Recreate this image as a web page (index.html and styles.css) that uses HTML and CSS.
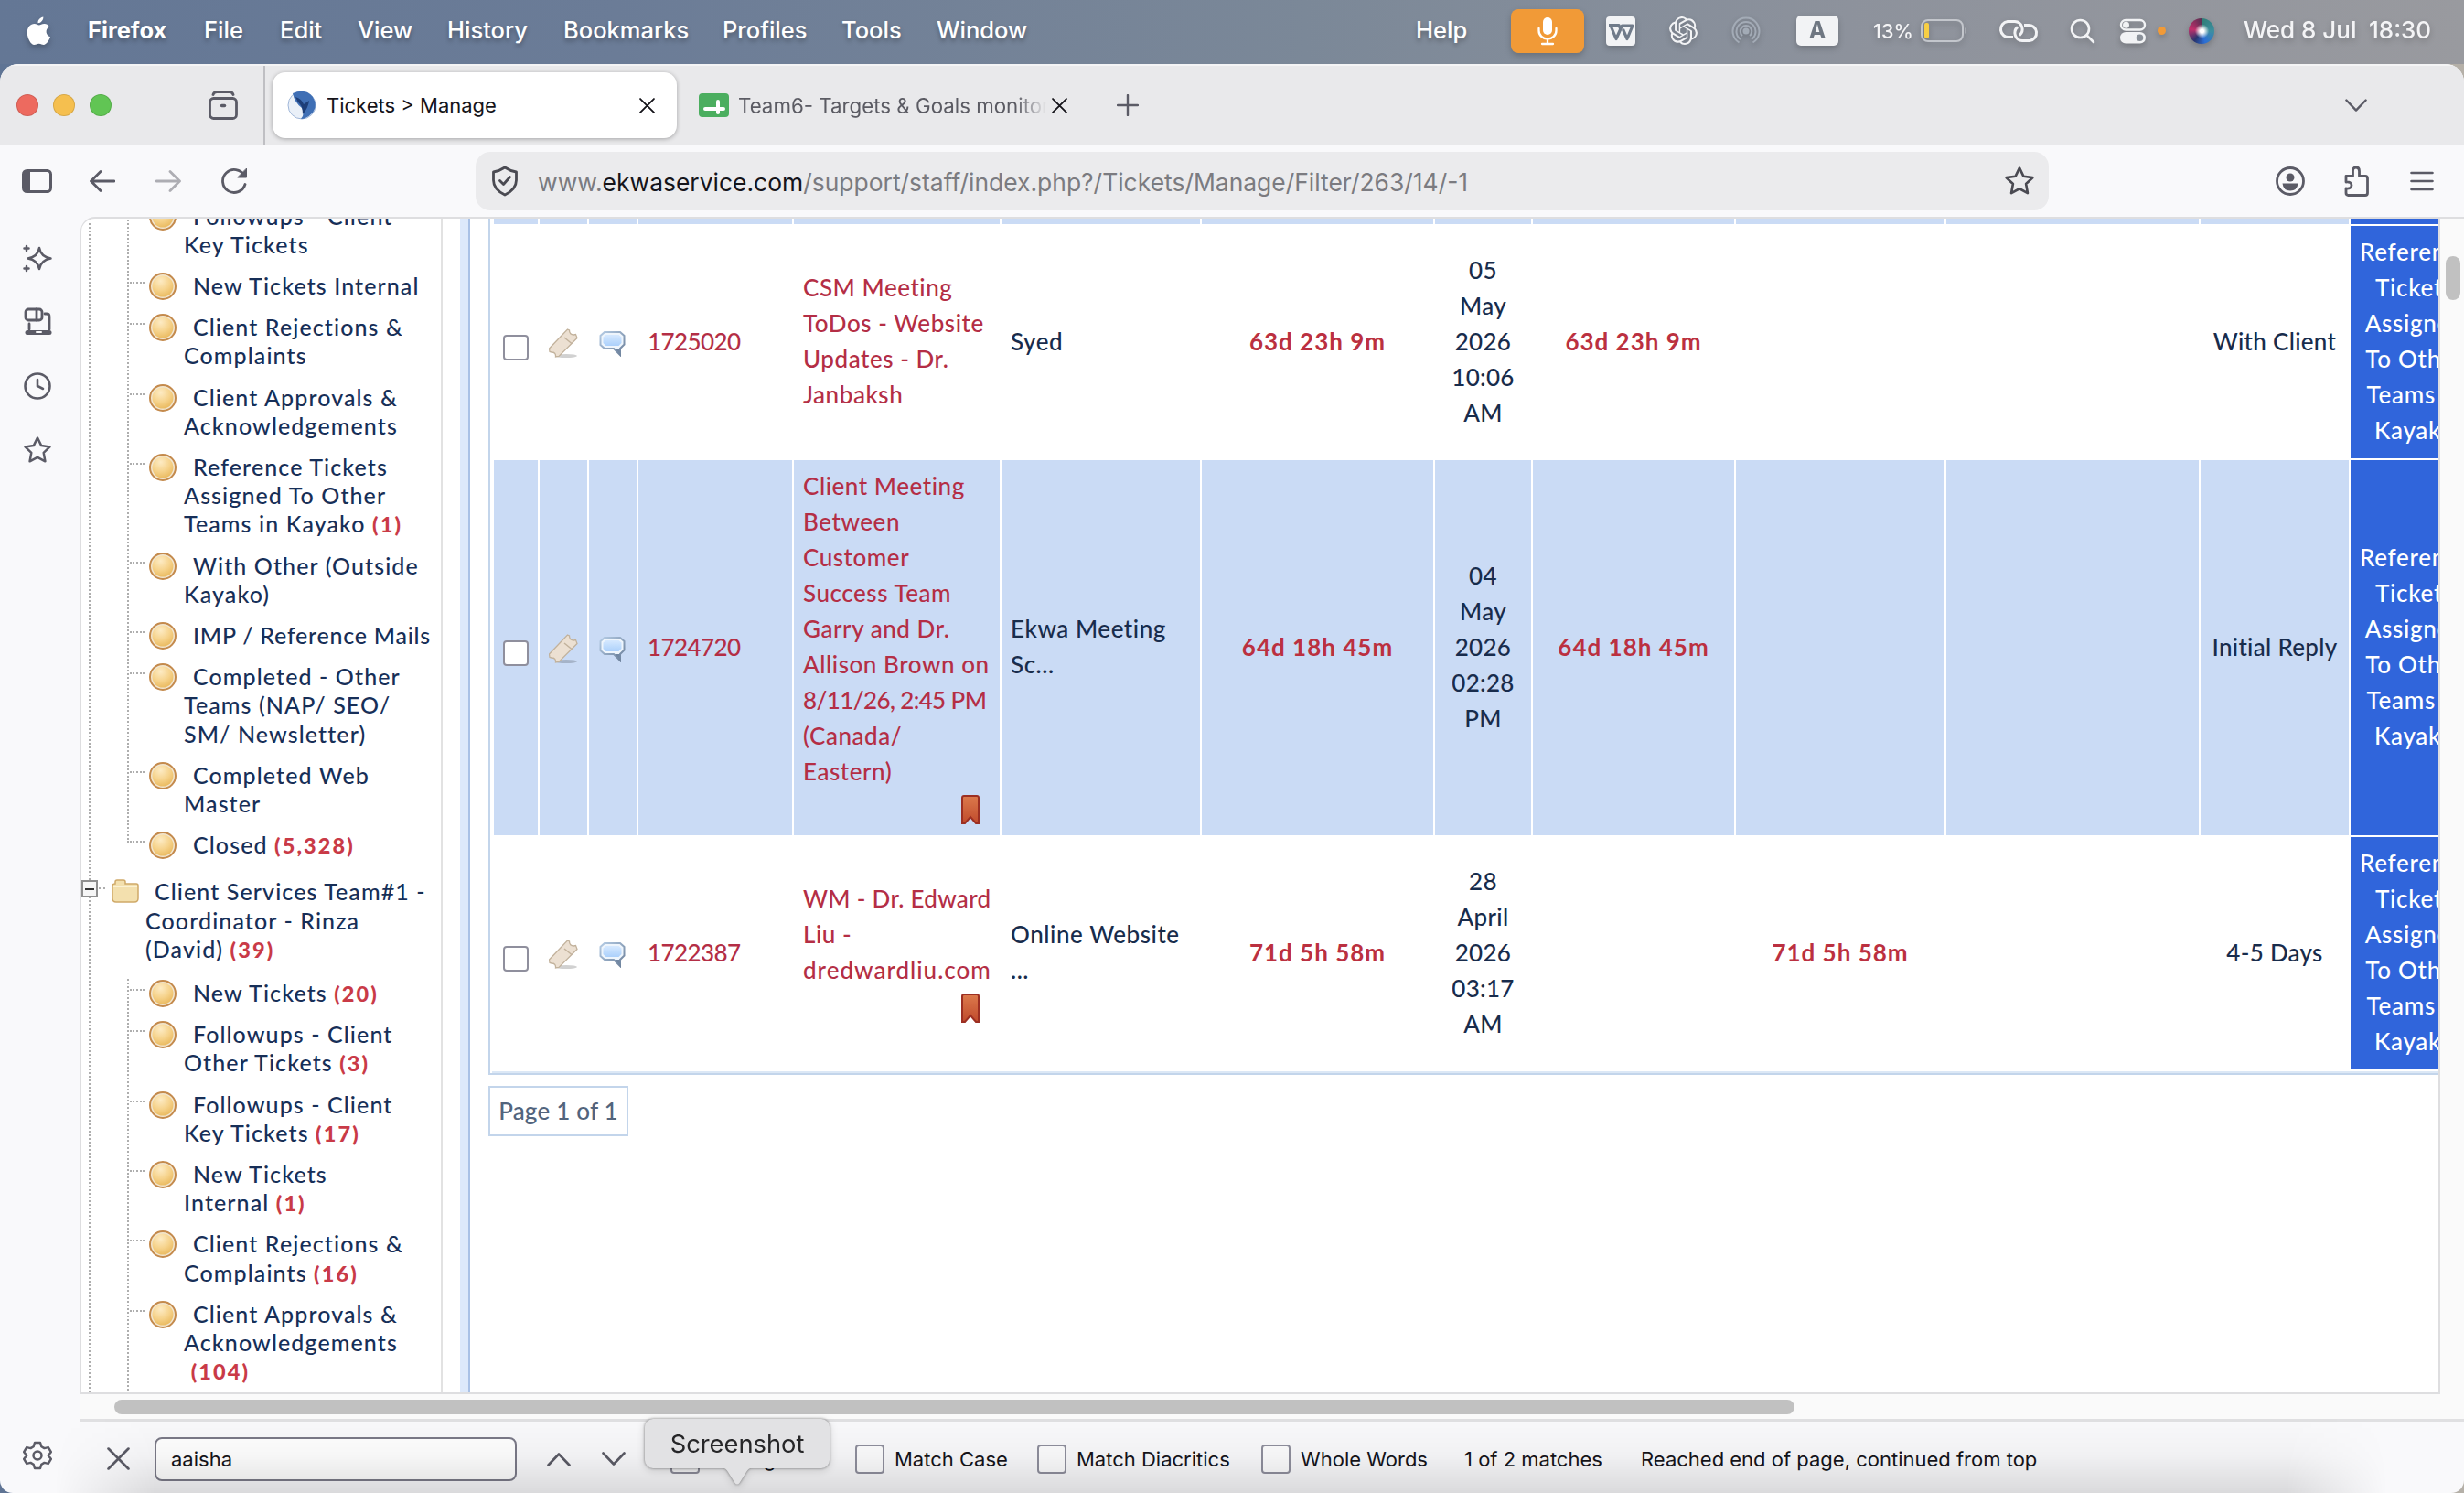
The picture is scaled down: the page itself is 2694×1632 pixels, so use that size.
FILE: index.html
```html
<!DOCTYPE html>
<html lang="en">
<head>
    <meta charset="UTF-8">
    <title>Tickets &gt; Manage</title>
    <link rel="stylesheet" href="styles.css">
</head>
<body>
    <!-- Shared icons -->
    <svg class="defs" width="0" height="0">
        <defs>
            <radialGradient id="gold" cx="0.4" cy="0.25" r="0.8">
                <stop offset="0" stop-color="#fdebc4"/>
                <stop offset="0.55" stop-color="#f6d38c"/>
                <stop offset="1" stop-color="#e9b85c"/>
            </radialGradient>
            <linearGradient id="blue" x1="0" y1="0" x2="0" y2="1">
                <stop offset="0" stop-color="#d6e9ff"/>
                <stop offset="1" stop-color="#abd0fb"/>
            </linearGradient>
            <linearGradient id="edge" x1="0" y1="0" x2="1" y2="1">
                <stop offset="0" stop-color="#b4cbe4"/>
                <stop offset="1" stop-color="#6b7f99"/>
            </linearGradient>
            <linearGradient id="red" x1="0" y1="0" x2="0" y2="1">
                <stop offset="0" stop-color="#dc7a4c"/>
                <stop offset="1" stop-color="#c04a2c"/>
            </linearGradient>
            <symbol id="ball" viewBox="0 0 30 30">
                <circle cx="15" cy="15" r="14" fill="#f1e6d0" stroke="#c48a4c" stroke-width="2"/>
                <circle cx="15" cy="15" r="11.5" fill="url(#gold)"/>
            </symbol>
            <symbol id="ticket" viewBox="0 0 32 32">
                <ellipse cx="19" cy="30" rx="12" ry="2" fill="#000" opacity="0.18"/>
                <path d="M20.500 1l2 1q0 5 5 5l2-.5 1.500 4-20 20-3.500.5q.5-5-4.500-5l-2-.5-.5-3.500z" fill="#ece0d2" stroke="#c2b29c" stroke-width="1.300"/>
                <path d="M17 10l8 6.500" stroke="#c2b29c" stroke-width="1.500"/>
            </symbol>
            <symbol id="bubble" viewBox="0 0 30 30">
                <path d="M6 3h17l4.500 4v9.500L23 21v7l-7-7H6l-4.500-4V7z" fill="#eef5fc" stroke="url(#edge)" stroke-width="2"/>
                <path d="M7.500 6h14l3 2.500v6.500l-3 3h-14l-3-3V8.500z" fill="url(#blue)"/>
                <path d="M17 21h5.500v6z" fill="#7187a3"/>
            </symbol>
            <symbol id="flag" viewBox="0 0 20 32">
                <path d="M1 3q0-2 2-2h14q2 0 2 2v28h-3l-6-7-6 7H1z" fill="url(#red)" stroke="#9c2f22" stroke-width="2"/>
            </symbol>
            <symbol id="star" viewBox="0 0 32 32">
                <path d="M16 2.500l4.200 8.600 9.300 1.300-6.800 6.500 1.700 9.400L16 23.800l-8.400 4.500 1.700-9.400-6.800-6.500 9.300-1.300z" fill="none" stroke="currentColor" stroke-width="2.500" stroke-linejoin="round"/>
            </symbol>
            <symbol id="close" viewBox="0 0 24 24">
                <path d="M1.500 1.500l21 21M22.500 1.500l-21 21" stroke="currentColor" stroke-width="2.600" stroke-linecap="round"/>
            </symbol>
            <symbol id="down" viewBox="0 0 26 16">
                <path d="M1.500 1.500L13 13.500 24.500 1.500" fill="none" stroke="currentColor" stroke-width="2.600" stroke-linecap="round" stroke-linejoin="round"/>
            </symbol>
        </defs>
    </svg>

    <header class="menubar">
        <svg class="apple" viewBox="0 0 28 32"><path fill="#fff" d="M19 0c.3 3.400-2.500 7-6 7C12.600 3.600 15.800.4 19 0zM25.600 11c-4.800 3-4 9.600 1.400 11.600C25.300 27 22.400 31.500 19.500 31.500c-2.200 0-2.800-1.300-5.400-1.300s-3.300 1.300-5.400 1.300C5 31.500.8 24 .8 17.500c0-6 3.900-9.700 8-9.700 2.500 0 4.200 1.500 5.500 1.500 1.200 0 3.400-1.700 6.200-1.500 2 .1 3.900 1 5.100 3.200z"/></svg>
        <nav class="menus">
            <b>Firefox</b><span>File</span><span>Edit</span><span>View</span><span>History</span><span>Bookmarks</span><span>Profiles</span><span>Tools</span><span>Window</span><span>Help</span>
        </nav>
        <div class="status">
            <span class="mic"><svg width="24" height="32" viewBox="0 0 24 32"><rect x="7" y="1" width="10" height="19" rx="5" fill="#fff"/><path d="M2.500 13v2.500a9.500 9 0 0 0 19 0V13M12 25v4M6 30h12" fill="none" stroke="#fff" stroke-width="2.300" stroke-linecap="round"/></svg></span>
            <svg width="34" height="34" viewBox="0 0 34 34"><rect x="1" y="1" width="32" height="32" rx="4" fill="#f2f3f5"/><path d="M4 10.500h11l2 5M6 11l6 14.500L18.500 11H30L24 25.500 19.500 15" fill="none" stroke="#707b8a" stroke-width="3.200" stroke-linejoin="round"/></svg>
            <svg width="31" height="31" viewBox="0 0 24 24"><path fill="#f2f3f5" d="M22.2819 9.8211a5.9847 5.9847 0 0 0-.5157-4.9108 6.0462 6.0462 0 0 0-6.5098-2.9A6.0651 6.0651 0 0 0 4.9807 4.1818a5.9847 5.9847 0 0 0-3.9977 2.9 6.0462 6.0462 0 0 0 .7427 7.0966 5.98 5.98 0 0 0 .511 4.9107 6.051 6.051 0 0 0 6.5146 2.9001A5.9847 5.9847 0 0 0 13.2599 24a6.0557 6.0557 0 0 0 5.7718-4.2058 5.9894 5.9894 0 0 0 3.9977-2.9001 6.0557 6.0557 0 0 0-.7475-7.0729zm-9.022 12.6081a4.4755 4.4755 0 0 1-2.8764-1.0408l.1419-.0804 4.7783-2.7582a.7948.7948 0 0 0 .3927-.6813v-6.7369l2.02 1.1686a.071.071 0 0 1 .038.052v5.5826a4.504 4.504 0 0 1-4.4945 4.4944zm-9.6607-4.1254a4.4708 4.4708 0 0 1-.5346-3.0137l.142.0852 4.783 2.7582a.7712.7712 0 0 0 .7806 0l5.8428-3.3685v2.3324a.0804.0804 0 0 1-.0332.0615L9.74 19.9502a4.4992 4.4992 0 0 1-6.1408-1.6464zM2.3408 7.8956a4.485 4.485 0 0 1 2.3655-1.9728V11.6a.7664.7664 0 0 0 .3879.6765l5.8144 3.3543-2.0201 1.1685a.0757.0757 0 0 1-.071 0l-4.8303-2.7865A4.504 4.504 0 0 1 2.3408 7.872zm16.5963 3.8558L13.1038 8.364 15.1192 7.2a.0757.0757 0 0 1 .071 0l4.8303 2.7913a4.4944 4.4944 0 0 1-.6765 8.1042v-5.6772a.79.79 0 0 0-.407-.667zm2.0107-3.0231l-.142-.0852-4.7735-2.7818a.7759.7759 0 0 0-.7854 0L9.409 9.2297V6.8974a.0662.0662 0 0 1 .0284-.0615l4.8303-2.7866a4.4992 4.4992 0 0 1 6.6802 4.66zM8.3065 12.863l-2.02-1.1638a.0804.0804 0 0 1-.038-.0567V6.0742a4.4992 4.4992 0 0 1 7.3757-3.4537l-.142.0805L8.704 5.459a.7948.7948 0 0 0-.3927.6813zm1.0976-2.3654l2.602-1.4998 2.6069 1.4998v2.9994l-2.5974 1.4997-2.6067-1.4997Z"/></svg>
            <svg width="32" height="32" viewBox="0 0 32 32" fill="none" stroke="#a3abb6" stroke-width="2"><circle cx="16" cy="16" r="2.500" fill="#a3abb6"/><path d="M12 21a6.200 6.200 0 1 1 8 0M10 25a10.500 10.500 0 1 1 12 0M8.500 28.500a14.500 14.500 0 1 1 15 0"/></svg>
            <span class="lang">A</span>
            <span class="percent">13%</span>
            <svg width="52" height="26" viewBox="0 0 52 26"><rect x="1" y="1" width="45" height="23" rx="7" fill="none" stroke="#c3c6cc" stroke-width="2"/><rect x="4" y="4" width="5" height="17" rx="2" fill="#f7ce45"/><path d="M48.500 9q2.500 3.500 0 7z" fill="#c3c6cc"/></svg>
            <svg width="46" height="28" viewBox="0 0 46 28" fill="none" stroke="#f2f3f5" stroke-width="3"><path d="M17 20.500h-4a8.500 8.500 0 0 1-2-17h8a8.500 8.500 0 0 1 5 15"/><path d="M29 7.500h4a8.500 8.500 0 0 1 2 17h-8a8.500 8.500 0 0 1-5-15"/></svg>
            <svg width="28" height="28" viewBox="0 0 28 28" fill="none" stroke="#f2f3f5" stroke-width="2.600" stroke-linecap="round"><circle cx="11.500" cy="11.500" r="9.500"/><path d="M18.500 18.500l7.500 7.500"/></svg>
            <svg width="30" height="28" viewBox="0 0 30 28"><rect x="2" y="2" width="26" height="10.500" rx="5.200" fill="none" stroke="#f2f3f5" stroke-width="2.400"/><circle cx="7.500" cy="7.200" r="3.500" fill="#f2f3f5"/><rect x="1" y="15" width="28" height="12.500" rx="6.200" fill="#f2f3f5"/><circle cx="22.500" cy="21.200" r="3.800" fill="#8a9099"/></svg>
            <i class="dot"></i>
            <i class="siri"></i>
            <span class="clock">Wed 8 Jul</span>
            <span class="clock">18:30</span>
        </div>
    </header>

    <div class="window">
        <div class="tabstrip">
            <div class="lights"><i class="l-red"></i><i class="l-yellow"></i><i class="l-green"></i></div>
            <div class="fxview"><svg width="34" height="34" viewBox="0 0 34 34" fill="none" stroke="#5b5b66" stroke-width="2.800" stroke-linecap="round"><rect x="2.500" y="9.500" width="29" height="22" rx="4"/><path d="M6 5.500q1-3 4-3h14q3 0 4 3"/><path d="M15.500 17.500h3" stroke-width="3.500"/></svg></div>
            <div class="tab active">
                <svg width="32" height="32" viewBox="0 0 32 32"><circle cx="16" cy="16" r="15" fill="#eaf0f8" stroke="#9fb6d8"/><path d="M6 3q14-6 22 4 6 10-1 18-6 6-12 6 5-6 1-12Q8 13 6 3z" fill="#3f6fb5"/><path d="M9 7q7 2 9 8l6-4q-1 8-7 15 0-8-3-11-3-3-5-8z" fill="#1d3e78"/></svg>
                <span class="title">Tickets &gt; Manage</span>
                <svg class="x" width="17" height="17"><use href="#close"/></svg>
            </div>
            <div class="tab">
                <svg width="33" height="26" viewBox="0 0 33 26"><rect width="33" height="26" rx="4" fill="#4bae5f"/><path d="M7 17h20M21 9v12" stroke="#fff" stroke-width="4" stroke-linecap="round"/></svg>
                <span class="title fade">Team6- Targets &amp; Goals monitoring</span>
                <svg class="x" width="17" height="17"><use href="#close"/></svg>
            </div>
            <svg class="plus" width="24" height="24" viewBox="0 0 24 24"><path d="M12 1v22M1 12h22" stroke="#5b5b66" stroke-width="2.400" stroke-linecap="round"/></svg>
            <svg class="alltabs" width="24" height="15"><use href="#down"/></svg>
        </div>

        <div class="toolbar">
            <div class="nav">
                <svg width="33" height="26" viewBox="0 0 33 26"><rect x="1.500" y="1.500" width="30" height="23" rx="4" fill="none" stroke="#5b5b66" stroke-width="3"/><path d="M3 2h6v22H3z" fill="#5b5b66"/></svg>
                <svg width="28" height="24" viewBox="0 0 28 24" fill="none" stroke="#5b5b66" stroke-width="2.800" stroke-linecap="round" stroke-linejoin="round"><path d="M12 1.500L1.500 12 12 22.500M2 12h25"/></svg>
                <svg width="28" height="24" viewBox="0 0 28 24" fill="none" stroke="#adadb3" stroke-width="2.800" stroke-linecap="round" stroke-linejoin="round"><path d="M16 1.500L26.500 12 16 22.500M26 12H1"/></svg>
                <svg width="30" height="30" viewBox="0 0 30 30" fill="none" stroke="#5b5b66" stroke-width="2.800" stroke-linecap="round"><path d="M26 18.500A12.500 12.500 0 1 1 25 9"/><path d="M27.500 1.500v9.500H18z" fill="#5b5b66" stroke-width="1"/></svg>
            </div>
            <div class="urlbar">
                <svg width="30" height="34" viewBox="0 0 30 34" fill="none" stroke="#4a4a52" stroke-width="2.800" stroke-linecap="round" stroke-linejoin="round"><path d="M15 2q6 4 12.500 5v9q0 10-12.500 16Q2.500 26 2.500 16V7Q9 6 15 2z"/><path d="M9.500 16.500l4 4 7-8"/></svg>
                <span class="url">www.<em>ekwaservice.com</em>/support/staff/index.php?/Tickets/Manage/Filter/263/14/-1</span>
                <svg class="bm" width="34" height="34"><use href="#star"/></svg>
            </div>
            <div class="tools">
                <svg width="34" height="34" viewBox="0 0 34 34"><circle cx="17" cy="17" r="14.500" fill="none" stroke="#5b5b66" stroke-width="2.800"/><circle cx="17" cy="13" r="4.500" fill="#5b5b66"/><path d="M8.500 19.500h17q-1 8-8.500 8t-8.500-8z" fill="#5b5b66"/></svg>
                <svg width="30" height="34" viewBox="0 0 30 34"><path d="M3 11.500h7.500V6q0-4 3.500-4t3.500 4v5.500H24q2.500 0 2.500 2.500v16q0 2.500-2.500 2.500H5.500Q3 32.500 3 30v-5q6 .5 6-3.500t-6-3.500z" fill="none" stroke="#5b5b66" stroke-width="2.800" stroke-linejoin="round"/></svg>
                <svg width="26" height="22" viewBox="0 0 26 22"><path d="M1.500 2h23M1.500 11h23M1.500 20h23" stroke="#5b5b66" stroke-width="2.600" stroke-linecap="round"/></svg>
            </div>
        </div>

        <div class="body">
            <aside class="rail">
                <svg width="32" height="32" viewBox="0 0 32 32" fill="none" stroke="#5b5b66" stroke-width="2.500" stroke-linecap="round" stroke-linejoin="round"><path d="M18 5q1.500 9.500 12.500 11.500Q19.500 18.500 18 28 16.500 18.500 5.500 16.500 16.500 14.500 18 5zM4 3v5M1.500 5.500h5M4 25v5M1.500 27.500h5"/></svg>
                <svg width="32" height="32" viewBox="0 0 32 32" fill="none" stroke="#5b5b66" stroke-width="2.800" stroke-linecap="round" stroke-linejoin="round"><rect x="3" y="2" width="18" height="12" rx="3"/><path d="M15 2v12M24 7h2q3 0 3 3v14M7 18v6"/><path d="M5 27.500h24" stroke-width="5"/><path d="M15 27h5" stroke="#f9f9fb" stroke-width="2"/></svg>
                <svg width="32" height="32" viewBox="0 0 32 32" fill="none" stroke="#5b5b66" stroke-width="2.600" stroke-linecap="round"><circle cx="16" cy="16" r="13.500"/><path d="M16 9v7l6 3"/></svg>
                <svg width="32" height="32"><use href="#star"/></svg>
                <svg class="gear" width="32" height="32" viewBox="0 0 32 32" fill="none" stroke="#5b5b66" stroke-width="2.500" stroke-linejoin="round"><path d="M13 2h6l1.300 4.200 3.200 1.900 4.300-1 3 5.100L27.800 16l3 3.800-3 5.100-4.300-1-3.200 1.900L19 30h-6l-1.300-4.200-3.200-1.900-4.300 1-3-5.100L4.200 16l-3-3.800 3-5.100 4.300 1 3.200-1.900z"/><circle cx="16" cy="16" r="4.500"/></svg>
            </aside>

            <div class="view">
                <div class="page">
                    <nav class="tree">
                        <ul class="queue first">
                            <li><i></i><svg><use href="#ball"/></svg><p>Followups - Client<br>Key Tickets</p></li>
                            <li><i></i><svg><use href="#ball"/></svg><p>New Tickets Internal</p></li>
                            <li><i></i><svg><use href="#ball"/></svg><p>Client Rejections &amp;<br>Complaints</p></li>
                            <li><i></i><svg><use href="#ball"/></svg><p>Client Approvals &amp;<br>Acknowledgements</p></li>
                            <li><i></i><svg><use href="#ball"/></svg><p>Reference Tickets<br>Assigned To Other<br>Teams in Kayako <b>(1)</b></p></li>
                            <li><i></i><svg><use href="#ball"/></svg><p>With Other (Outside<br>Kayako)</p></li>
                            <li><i></i><svg><use href="#ball"/></svg><p class="tight">IMP / Reference Mails</p></li>
                            <li><i></i><svg><use href="#ball"/></svg><p>Completed - Other<br>Teams (NAP/ SEO/<br>SM/ Newsletter)</p></li>
                            <li><i></i><svg><use href="#ball"/></svg><p>Completed Web<br>Master</p></li>
                            <li><i></i><svg><use href="#ball"/></svg><p>Closed <b>(5,328)</b></p></li>
                        </ul>
                        <div class="dept">
                            <span class="toggle"></span><i></i>
                            <svg width="30" height="26" viewBox="0 0 30 26"><path d="M4 5V3q0-2 2-2h7q2 0 2 2v2h12q2 0 2 2v14q0 4-4 4H5q-4 0-4-4V7q0-2 3-2z" fill="#f3e0ae" stroke="#cfa968" stroke-width="1.500"/><path d="M2 8h26" stroke="#fbf1d2" stroke-width="2"/></svg>
                            <p>Client Services Team#1 -<br>Coordinator - Rinza<br>(David) <b>(39)</b></p>
                        </div>
                        <ul class="queue">
                            <li><i></i><svg><use href="#ball"/></svg><p>New Tickets <b>(20)</b></p></li>
                            <li><i></i><svg><use href="#ball"/></svg><p>Followups - Client<br>Other Tickets <b>(3)</b></p></li>
                            <li><i></i><svg><use href="#ball"/></svg><p>Followups - Client<br>Key Tickets <b>(17)</b></p></li>
                            <li><i></i><svg><use href="#ball"/></svg><p>New Tickets<br>Internal <b>(1)</b></p></li>
                            <li><i></i><svg><use href="#ball"/></svg><p>Client Rejections &amp;<br>Complaints <b>(16)</b></p></li>
                            <li><i></i><svg><use href="#ball"/></svg><p>Client Approvals &amp;<br>Acknowledgements<br><b>&nbsp;(104)</b></p></li>
                        </ul>
                    </nav>
                    <div class="splitter"></div>
                    <main>
                        <div class="grid">
                            <table>
                                <colgroup>
                                    <col class="w48"><col class="w52"><col class="w52"><col class="w168"><col class="w225"><col class="w217"><col class="w253"><col class="w105"><col class="w220"><col class="w228"><col class="w276"><col class="w162"><col class="w140">
                                </colgroup>
                                <tr class="alt cut"><td></td><td></td><td></td><td></td><td></td><td></td><td></td><td></td><td></td><td></td><td></td><td></td><td class="dep"></td></tr>
                                <tr>
                                    <td class="ic"><span class="box"></span></td>
                                    <td class="ic"><svg width="32" height="32"><use href="#ticket"/></svg></td>
                                    <td class="ic"><svg width="30" height="30"><use href="#bubble"/></svg></td>
                                    <td class="link num">1725020</td>
                                    <td class="link">CSM Meeting<br>ToDos - Website<br>Updates - Dr.<br>Janbaksh</td>
                                    <td>Syed</td>
                                    <td class="due">63d 23h 9m</td>
                                    <td class="mid">05<br>May<br>2026<br>10:06<br>AM</td>
                                    <td class="due">63d 23h 9m</td>
                                    <td></td>
                                    <td></td>
                                    <td class="mid">With Client</td>
                                    <td class="dep">Reference<br>Tickets<br>Assigned<br>To Other<br>Teams in<br>Kayako</td>
                                </tr>
                                <tr class="alt">
                                    <td class="ic"><span class="box"></span></td>
                                    <td class="ic"><svg width="32" height="32"><use href="#ticket"/></svg></td>
                                    <td class="ic"><svg width="30" height="30"><use href="#bubble"/></svg></td>
                                    <td class="link num">1724720</td>
                                    <td class="link">Client Meeting<br>Between<br>Customer<br>Success Team<br>Garry and Dr.<br>Allison Brown on<br><span class="num">8/11/26, 2:45 PM</span><br>(Canada/<br>Eastern)<div class="mark"><svg width="20" height="32"><use href="#flag"/></svg></div></td>
                                    <td>Ekwa Meeting<br>Sc...</td>
                                    <td class="due">64d 18h 45m</td>
                                    <td class="mid">04<br>May<br>2026<br>02:28<br>PM</td>
                                    <td class="due">64d 18h 45m</td>
                                    <td></td>
                                    <td></td>
                                    <td class="mid">Initial Reply</td>
                                    <td class="dep">Reference<br>Tickets<br>Assigned<br>To Other<br>Teams in<br>Kayako</td>
                                </tr>
                                <tr>
                                    <td class="ic"><span class="box"></span></td>
                                    <td class="ic"><svg width="32" height="32"><use href="#ticket"/></svg></td>
                                    <td class="ic"><svg width="30" height="30"><use href="#bubble"/></svg></td>
                                    <td class="link num">1722387</td>
                                    <td class="link"><span class="snug">WM - Dr. Edward</span><br>Liu -<br><span class="wide">dredwardliu.com</span><div class="mark"><svg width="20" height="32"><use href="#flag"/></svg></div></td>
                                    <td>Online Website<br>...</td>
                                    <td class="due">71d 5h 58m</td>
                                    <td class="mid">28<br>April<br>2026<br>03:17<br>AM</td>
                                    <td></td>
                                    <td class="due">71d 5h 58m</td>
                                    <td></td>
                                    <td class="mid">4-5 Days</td>
                                    <td class="dep">Reference<br>Tickets<br>Assigned<br>To Other<br>Teams in<br>Kayako</td>
                                </tr>
                            </table>
                        </div>
                        <div class="pager">Page 1 of 1</div>
                    </main>
                </div>
                <div class="vscroll"><i></i></div>
                <div class="hscroll"><i></i></div>
                <div class="findbar">
                    <svg class="fx" width="25" height="25"><use href="#close"/></svg>
                    <div class="field">aaisha</div>
                    <svg class="up" width="26" height="16"><use href="#down"/></svg>
                    <svg class="dn" width="26" height="16"><use href="#down"/></svg>
                    <label class="c1"><span class="check"></span>Highlight All</label>
                    <label class="c2"><span class="check"></span>Match Case</label>
                    <label class="c3"><span class="check"></span>Match Diacritics</label>
                    <label class="c4"><span class="check"></span>Whole Words</label>
                    <span class="found">1 of 2 matches</span>
                    <span class="note">Reached end of page, continued from top</span>
                </div>
            </div>
        </div>
        <div class="dockshade"></div>
        <div class="tooltip">Screenshot<svg width="34" height="19" viewBox="0 0 34 19"><path d="M0 0h34q-5 1-7 5l-7.500 12q-2.500 3-5 0L7 5Q5 1 0 0z" fill="#e2e2e4"/></svg></div>
    </div>
</body>
</html>
```
FILE: styles.css
```css
* { box-sizing: border-box; }
body { margin: 0; width: 2694px; height: 1632px; overflow: hidden; font-family: Inter, sans-serif; color: #15141a; background: linear-gradient(90deg, #5f7494, #6f7c94 45%, #8a8f99 72%, #b5b0a8); }
.defs { position: absolute; }
svg { display: block; flex: none; }
i { display: block; flex: none; }
p, ul { margin: 0; padding: 0; list-style: none; }

/* macOS menu bar */
.menubar { height: 70px; display: flex; align-items: center; padding-bottom: 3px; background: linear-gradient(90deg, #647795, #6b7c97 25%, #7b8898 53%, #8d929c 75%, #999a9f); color: #fff; font-size: 25.5px; font-weight: 500; }
.apple { width: 27px; height: 32px; margin-left: 29px; filter: drop-shadow(0 3px 3px rgba(0,0,0,0.25)); }
.menus { display: grid; grid-template-columns: 127px 83px 85px 98px 127px 174px 130px 104px 524px 104px; margin-left: 40px; text-shadow: 0 3px 5px rgba(0,0,0,0.3); }
.menus span, .menus b, .clock { position: relative; top: -1px; }
.status { display: grid; grid-template-columns: 103px 70px 68px 71px 84px 52px 84px 79px 54px 38px 38px 60px 137px 80px; align-items: center; color: #f4f4f6; filter: drop-shadow(0 3px 3px rgba(0,0,0,0.2)); }
.mic { width: 80px; height: 48px; border-radius: 8px; background: #f19a37; display: grid; place-items: center; }
.lang { width: 46px; height: 33px; border-radius: 5px; background: #f2f3f5; color: #6f7782; font-size: 25px; font-weight: 700; line-height: 33px; text-align: center; }
.percent { font-size: 21.5px; white-space: nowrap; }
.dot { width: 9px; height: 9px; border-radius: 50%; background: #f19a37; margin-left: 4px; }
.siri { width: 28px; height: 28px; border-radius: 50%; background: radial-gradient(circle at 52% 50%, #fff 0 10%, transparent 38%), conic-gradient(#2f7d76, #3d8fa0 25%, #2c6fd6 45%, #27346e 60%, #c22f6b 78%, #5a2f52); }
.clock { white-space: nowrap; font-size: 26px; }

/* browser window */
.window { position: relative; height: 1562px; border-radius: 20px 20px 14px 14px; overflow: hidden; background: #f9f9fb; }
.tabstrip { height: 88px; background: #e9e9eb; display: flex; align-items: center; border-top: 2px solid #f4f4f5; font-size: 22px; }
.lights { display: flex; gap: 16px; margin-left: 18px; width: 209px; }
.lights i { width: 24px; height: 24px; border-radius: 50%; border: 1px solid rgba(0,0,0,0.12); }
.l-red { background: #ed6a5f; }
.l-yellow { background: #f5bf4f; }
.l-green { background: #61c554; }
.fxview { width: 63px; height: 86px; padding-top: 26px; border-right: 2px solid #bfbfc3; }
.tab { width: 442px; height: 72px; margin-left: 8px; border-radius: 14px; padding: 0 24px 0 16px; display: flex; align-items: center; }
.tab.active { background: #fff; box-shadow: 0 1px 5px rgba(0,0,0,0.3); }
.tab .title { flex: 1; margin-left: 11px; white-space: nowrap; overflow: hidden; }
.tab .fade { color: #5b5b63; font-size: 22.3px; flex: none; width: 337px; margin-left: 10px; margin-right: 6px; -webkit-mask-image: linear-gradient(90deg, #000 90%, transparent); mask-image: linear-gradient(90deg, #000 90%, transparent); }
.plus { margin-left: 31px; }
.alltabs { margin-left: auto; margin-right: 106px; color: #5b5b66; }

.toolbar { height: 79px; display: flex; align-items: center; padding-top: 1px; }
.nav { display: grid; grid-template-columns: 74px 72px 72px 30px; align-items: center; margin-left: 24px; width: 496px; }
.urlbar { width: 1720px; height: 64px; border-radius: 16px; background: #ebebed; display: flex; align-items: center; padding-left: 17px; color: #4a4a52; }
.url { margin-left: 21px; padding-top: 1px; font-size: 26.45px; color: #7b7b80; white-space: nowrap; }
.url em { font-style: normal; color: #15141a; }
.bm { margin-left: auto; margin-right: 15px; }
.tools { display: grid; grid-template-columns: 75px 73px 26px; align-items: center; margin-left: 247px; }

.body { display: flex; height: 1395px; }
.rail { width: 88px; padding: 29px 0 25px 25px; display: flex; flex-direction: column; gap: 38px; color: #5b5b66; }
.gear { margin-top: auto; }
.view { width: 2606px; display: grid; grid-template: 1287px 27px 81px / 2580px 26px; }

/* help desk page */
.page { border: 2px solid #dedee0; border-left-width: 1px; border-radius: 16px 0 0 0; background: #fff; overflow: hidden; display: flex; align-items: flex-start; font-family: Lato, sans-serif; color: #182c4c; }
.tree { width: 395px; height: 1283px; border-right: 2px solid #e2e2e2; flex: none; font-size: 25px; line-height: 31.2px; color: #172f58; overflow: hidden; position: relative; }
.tree::before { content: ""; position: absolute; left: 8px; top: 0; height: 100%; border-left: 2px dotted #aeaeae; }
.queue { margin-left: 50px; border-left: 2px dotted #aeaeae; display: flex; flex-direction: column; }
.queue.first { margin-top: -18.5px; }
.queue.first li:last-child { margin-bottom: -32px; }
.queue li { display: flex; padding-bottom: 14px; }
.queue li i { width: 16px; margin: 11px 6px 0 1px; height: 0; border-top: 2px dotted #aeaeae; }
.queue li svg { width: 30px; height: 30px; margin: 1px 8px 0 -1px; }
.tree p { text-indent: 10px; white-space: nowrap; letter-spacing: 1.1px; font-weight: 500; }
.tree p.tight { letter-spacing: 0.75px; }
.tree p b { color: #c93a47; font-size: 23.5px; line-height: 1; font-weight: 900; letter-spacing: 2.1px; }
.dept { display: flex; position: relative; margin: 38px 0 17px; }
.toggle { width: 18px; height: 19px; margin-top: 3px; border: 2px solid #8f8f8f; background: linear-gradient(#333, #333) center/10px 2px no-repeat #f6f6f6; }
.dept i { width: 7px; margin: 11px 9px 0 1px; height: 0; border-top: 2px dotted #aeaeae; }
.dept svg { margin: 2px 7px 0 -2px; }
.splitter { width: 11px; height: 1283px; margin-left: 19px; background: #dde9fb; border-right: 2px solid #a9c1e6; flex: none; }
main { margin-left: 20px; flex: none; font-size: 26px; line-height: 39px; letter-spacing: 0.55px; font-weight: 500; }
.grid { border-left: 2px solid #c3d5eb; border-bottom: 2px solid #c3d5eb; padding-left: 2px; margin-top: -16px; }
table { table-layout: fixed; width: 2174px; border-collapse: separate; border-spacing: 2px; border-bottom: 2px solid #dce8f6; }
.w48 { width: 48px; } .w52 { width: 52px; } .w168 { width: 168px; } .w225 { width: 225px; }
.w217 { width: 217px; } .w253 { width: 253px; } .w105 { width: 105px; } .w220 { width: 220px; }
.w228 { width: 228px; } .w276 { width: 276px; } .w162 { width: 162px; } .w140 { width: 140px; }
td { padding: 9px 10px 11px; white-space: nowrap; vertical-align: middle; }
.cut td { height: 20px; padding: 0; }
.alt td { background: #cadbf5; }
td.link { color: #b42e45; }
.num { letter-spacing: -0.6px; }
.snug { letter-spacing: 0.3px; }
.wide { letter-spacing: 1px; }
td.due { color: #bb3040; font-weight: bold; text-align: center; letter-spacing: 1px; }
td.mid { text-align: center; padding: 9px 0 11px; letter-spacing: 0.3px; }
tr td.dep { background: #3065db; color: #fff; text-align: center; letter-spacing: 0.7px; }
td.ic { padding: 2px 0 0; }
td.ic svg { margin: 0 auto; }
.box { display: block; width: 28px; height: 28px; margin: 10px auto 0; border: 2px solid #8f8f9d; border-radius: 4px; background: #fff; }
.mark { height: 39px; padding: 6px 12px 0 0; display: flex; justify-content: flex-end; }
.pager { width: 153px; height: 55px; margin-top: 12px; border: 2px solid #c3d5eb; color: #52647d; text-align: center; line-height: 51px; letter-spacing: 0.2px; }

.vscroll { background: #fafafa; border-top: 2px solid #dedee0; }
.vscroll i { width: 16px; height: 48px; margin: 41px 0 0 6px; border-radius: 8px; background: #c1c1c1; }
.hscroll { grid-column: 1 / 3; background: #fafafa; padding: 6px 0 0 37px; }
.hscroll i { width: 1837px; height: 16px; border-radius: 8px; background: #c1c1c1; }

.findbar { grid-column: 1 / 3; border-top: 3px solid #e0e0e2; padding-top: 3px; display: flex; align-items: center; font-size: 22px; color: #15141a; white-space: nowrap; }
.fx { margin-left: 29px; color: #5b5b66; }
.field { width: 396px; height: 48px; margin-left: 27px; border: 2px solid #7b7a88; border-radius: 8px; background: #fff; padding-left: 16px; line-height: 44px; }
.up { margin-left: 33px; color: #5b5b66; transform: scaleY(-1); }
.dn { margin-left: 34px; color: #5b5b66; }
.findbar label { display: flex; align-items: center; }
.check { width: 32px; height: 32px; margin-right: 11px; border: 2px solid #8f8f9d; border-radius: 4px; background: #fcfcfd; }
.c1 { margin-left: 49px; width: 202px; }
.c2 { width: 199px; }
.c3 { width: 245px; }
.c4 { width: 222px; }
.found { width: 193px; }

.dockshade { position: absolute; left: 0; right: 0; bottom: 0; height: 84px; background: linear-gradient(rgba(0,0,0,0), rgba(0,0,0,0.03) 50%, rgba(0,0,0,0.12)); -webkit-mask-image: linear-gradient(90deg, transparent 60px, #000 170px, #000 2500px, transparent 2610px); mask-image: linear-gradient(90deg, transparent 60px, #000 170px, #000 2500px, transparent 2610px); }
.tooltip { position: absolute; left: 705px; top: 1481px; width: 202px; height: 54px; border-radius: 9px; background: #e2e2e4; font-size: 27.3px; line-height: 55px; text-align: center; color: #262628; filter: drop-shadow(0 0 1.5px rgba(0,0,0,0.45)) drop-shadow(0 2px 4px rgba(0,0,0,0.15)); }
.tooltip svg { position: absolute; left: 84px; top: 53px; }
```
